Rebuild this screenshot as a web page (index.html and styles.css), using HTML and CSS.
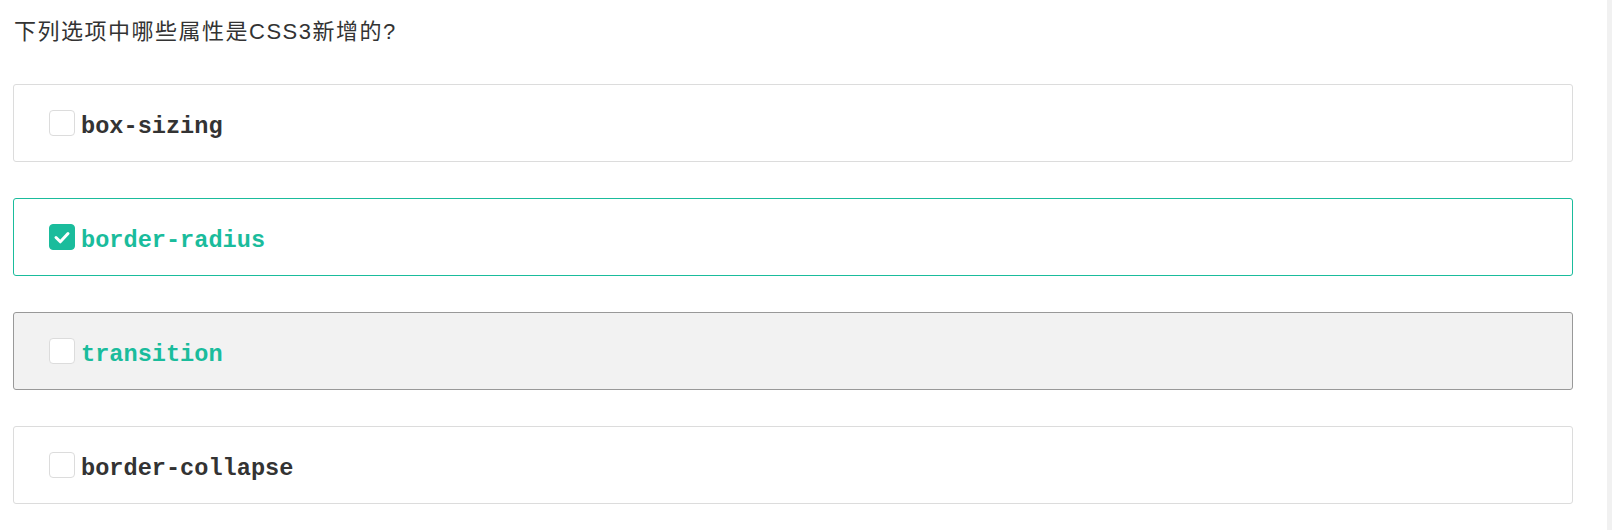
FILE: index.html
```html
<!DOCTYPE html>
<html lang="zh-CN">
<head>
<meta charset="utf-8">
<title>Quiz</title>
<link rel="stylesheet" href="styles.css">
</head>
<body>
<div class="page">
  <main class="main">
    <h1 class="question">下列选项中哪些属性是CSS3新增的?</h1>
    <ul class="options">
      <li class="option">
        <span class="check"></span>
        <span class="label">box-sizing</span>
      </li>
      <li class="option option--selected">
        <span class="check check--on">
          <svg viewBox="0 0 26 26" width="26" height="26" aria-hidden="true"><path d="M7 13.5 L11.3 17.8 L19 9.5" fill="none" stroke="#fff" stroke-width="3" stroke-linecap="round" stroke-linejoin="round"/></svg>
        </span>
        <span class="label">border-radius</span>
      </li>
      <li class="option option--hover">
        <span class="check"></span>
        <span class="label">transition</span>
      </li>
      <li class="option">
        <span class="check"></span>
        <span class="label">border-collapse</span>
      </li>
    </ul>
  </main>
  <div class="track"></div>
</div>
</body>
</html>
```
FILE: styles.css
```css
html, body {
  margin: 0;
  padding: 0;
  background: #fff;
}
body {
  font-family: "Liberation Sans", "Noto Sans CJK SC", sans-serif;
  color: #333;
}
.page {
  display: flex;
  min-height: 530px;
}
.main {
  flex: 1;
  padding: 15px 0 0 14px;
}
.track {
  width: 5px;
  background: #f1f1f1;
}
.question {
  margin: 0;
  font-size: 22px;
  letter-spacing: 1.5px;
  font-weight: normal;
  line-height: 34px;
  height: 34px;
  color: #333;
}
.options {
  list-style: none;
  margin: 35px 0 0 -1px;
  padding: 0;
  display: flex;
  flex-direction: column;
  gap: 36px;
  width: 1560px;
}
.option {
  box-sizing: border-box;
  height: 78px;
  border: 1px solid #dcdcdc;
  border-radius: 3px;
  background: #fff;
  display: flex;
  align-items: center;
  padding-left: 35px;
  gap: 6px;
}
.option--selected {
  border-color: #1abc9c;
}
.option--hover {
  background: #f2f2f2;
  border-color: #999;
}
.check {
  box-sizing: border-box;
  width: 26px;
  height: 26px;
  border: 1px solid #dcdcdc;
  border-radius: 4px;
  background: #fff;
  display: flex;
}
.check--on {
  background: #1abc9c;
  border-color: #1abc9c;
}
.check--on svg {
  margin: -1px;
}
.label {
  font-family: "Liberation Mono", monospace;
  font-weight: bold;
  font-size: 23.6px;
  padding-top: 6px;
  color: #333;
}
.option--selected .label,
.option--hover .label {
  color: #1abc9c;
}
```
